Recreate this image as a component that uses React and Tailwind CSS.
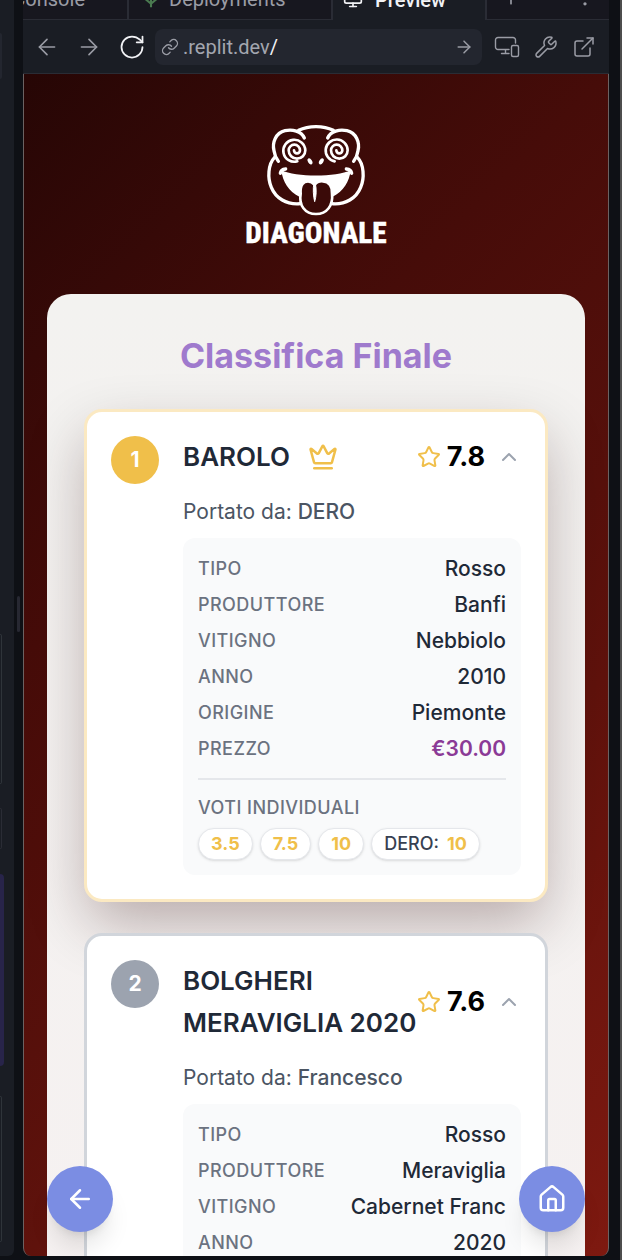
import {
  ArrowLeft,
  ArrowRight,
  ChevronUp,
  Crown,
  EllipsisVertical,
  ExternalLink,
  House,
  Link,
  Monitor,
  Plus,
  RotateCw,
  Star,
  Wrench,
} from "lucide-react";

const wines = [
  {
    rank: 1,
    name: "BAROLO",
    by: "DERO",
    score: "7.8",
    winner: true,
    details: [
      ["Tipo", "Rosso"],
      ["Produttore", "Banfi"],
      ["Vitigno", "Nebbiolo"],
      ["Anno", "2010"],
      ["Origine", "Piemonte"],
    ],
    price: "€30.00",
    votes: [{ value: "3.5" }, { value: "7.5" }, { value: "10" }, { who: "DERO", value: "10" }],
  },
  {
    rank: 2,
    name: "BOLGHERI MERAVIGLIA 2020",
    by: "Francesco",
    score: "7.6",
    winner: false,
    details: [
      ["Tipo", "Rosso"],
      ["Produttore", "Meraviglia"],
      ["Vitigno", "Cabernet Franc"],
      ["Anno", "2020"],
    ],
  },
];

function Logo() {
  return (
    <svg viewBox="0 0 480 420" className="h-[140px] w-40" role="img" aria-label="Diagonale">
      <g fill="none" stroke="#fff" strokeWidth="10" strokeLinecap="round" strokeLinejoin="round">
        <path d="M188 46 C218 31 262 31 292 46" />
        <path d="M205 69 C196 48 169 42 147 47 C119 54 108 82 114 107 C116 121 120 130 127 139" />
        <path d="M275 69 C284 48 311 42 333 47 C361 54 372 82 366 107 C364 121 360 130 353 139" />
        <path d="M116 127 C96 147 94 190 106 217 C119 249 151 270 193 266" />
        <path d="M364 127 C384 147 386 190 374 217 C361 249 329 270 287 266" />
        <path d="M133 175 C134 168 140 163 149 162" />
        <path d="M347 175 C346 168 340 163 331 162" />
      </g>
      <path
        d="M136 166 C180 187 300 187 344 166 C340 200 322 230 290 245 L190 245 C158 230 140 200 136 166 Z"
        fill="#fff"
      />
      <path
        d="M194 236 C192 211 202 199 216 199 C226 199 232 205 236 210 C242 201 250 198 261 199 C279 200 290 214 288 236 C292 271 273 297 240 297 C207 297 188 271 194 236 Z"
        fill="#3a0a08"
        stroke="#fff"
        strokeWidth="8"
      />
      <path d="M234 206 C230 219 232 245 236 260 C241 245 242 222 238 206 Z" fill="#fff" stroke="#fff" strokeWidth="3" />
      <g fill="none" stroke="#fff" strokeWidth="8" strokeLinecap="round">
        <path d="M184 139 A33 33 0 1 1 208 106 A25 25 0 0 1 158 106 A17 17 0 0 1 192 106 A9 9 0 0 1 174 106" />
        <path d="M296 139 A33 33 0 1 1 335 106 A25 25 0 0 1 285 106 A17 17 0 0 1 319 106 A9 9 0 0 1 301 106" />
      </g>
      <ellipse cx="222" cy="139" rx="6" ry="10" transform="rotate(-32 222 139)" fill="#fff" />
      <ellipse cx="256" cy="139" rx="6" ry="10" transform="rotate(32 256 139)" fill="#fff" />
      <text
        x="240"
        y="385"
        textAnchor="middle"
        fill="#fff"
        stroke="#fff"
        strokeWidth="1"
        fontSize="88"
        fontWeight="800"
        fontFamily="'Roboto Condensed', 'Liberation Sans Narrow', Roboto, sans-serif"
      >
        DIAGONALE
      </text>
    </svg>
  );
}

function WineCard({ wine }) {
  return (
    <article
      className={
        "flex items-start gap-6 rounded-[18px] border-[3px] bg-white p-6 " +
        (wine.winner ? "border-[#fbe9c2] shadow-[0_24px_60px_-4px_rgba(40,0,0,0.3)]" : "border-[#d1d5db]")
      }
    >
      <div
        className={
          "flex size-12 shrink-0 items-center justify-center rounded-full text-[21px] font-bold text-white " +
          (wine.winner ? "bg-[#f0bf4a]" : "bg-[#9ca3af]")
        }
      >
        {wine.rank}
      </div>
      <div className="min-w-0 flex-1">
        <header className="flex items-center">
          <h2 className="flex flex-1 items-center gap-[18px] text-[26px] leading-[42px] font-semibold text-[#1f2937]">
            {wine.name}
            {wine.winner && <Crown className="size-[30px] shrink-0 text-[#f0bf4a]" />}
          </h2>
          <Star className="size-6 shrink-0 text-[#f0bf4a]" />
          <span className="ml-[6px] text-[27px] font-bold text-black">{wine.score}</span>
          <button type="button" aria-label="Chiudi dettagli" className="ml-3 text-[#9ca3af]">
            <ChevronUp className="size-6" />
          </button>
        </header>
        <p className="mt-[19px] text-[21px] leading-[30px] text-[#4b5563]">
          Portato da: <span className="font-medium">{wine.by}</span>
        </p>
        <section className="mt-[11px] rounded-xl bg-[#f9fafb] px-[15px] pt-4 pb-[15px]">
          <dl className="flex flex-col gap-[6px]">
            {wine.details.map(([label, value]) => (
              <div key={label} className="flex justify-between">
                <dt className="text-lg leading-[30px] font-medium tracking-wide text-[#6b7280] uppercase">{label}</dt>
                <dd className="text-[21px] leading-[30px] font-medium text-[#1f2937]">{value}</dd>
              </div>
            ))}
            {wine.price && (
              <div className="flex justify-between">
                <dt className="text-lg leading-[30px] font-medium tracking-wide text-[#6b7280] uppercase">Prezzo</dt>
                <dd className="text-[21px] leading-[30px] font-semibold text-[#8b3a96]">{wine.price}</dd>
              </div>
            )}
          </dl>
          {wine.votes && (
            <div className="mt-[14px] border-t-2 border-[#e5e7eb] pt-4">
              <h3 className="text-lg leading-6 font-medium tracking-wide text-[#6b7280] uppercase">Voti individuali</h3>
              <ul className="mt-2 flex flex-wrap gap-[7px]">
                {wine.votes.map((vote, i) => (
                  <li
                    key={i}
                    className="flex gap-2 rounded-full border border-[#e5e7eb] bg-white px-3 py-[3px] text-lg leading-6 font-medium text-[#374151] shadow-sm"
                  >
                    {vote.who && <span>{vote.who}:</span>}
                    <span className="font-bold text-[#f0bf4a]">{vote.value}</span>
                  </li>
                ))}
              </ul>
            </div>
          )}
        </section>
      </div>
    </article>
  );
}

function Tabs() {
  return (
    <nav className="flex h-5 shrink-0 overflow-hidden bg-[#17171f] font-['Roboto',sans-serif] text-[20px] leading-6 text-[#9a9ca5]">
      <a href="#console" className="flex w-[106px] items-end justify-end border-r-2 border-b border-[#2a2c35] pr-[42px] pb-2">
        Console
      </a>
      <a href="#deployments" className="flex w-[202px] items-end gap-2 border-b border-[#2a2c35] pb-2 pl-3">
        <svg viewBox="0 0 24 24" className="mb-[3px] size-5" fill="none" stroke="#4a7a50" strokeWidth="2.500">
          <path d="M12 3v20M12 19l-7-6M12 19l7-6" />
        </svg>
        Deployments
      </a>
      <a
        href="#preview"
        className="flex w-[156px] items-end gap-3 border-x-2 border-[#2a2c35] bg-[#1a1d24] pb-2 pl-[10px] font-medium text-[#f1f2f5]"
      >
        <Monitor className="mb-[3px] size-5" />
        Preview
      </a>
      <div className="flex flex-1 items-end justify-between border-b border-[#2a2c35] px-[14px] pb-2">
        <button type="button" aria-label="New tab">
          <Plus className="mb-[3px] size-5" />
        </button>
        <button type="button" aria-label="More">
          <EllipsisVertical className="mb-[3px] size-5" />
        </button>
      </div>
    </nav>
  );
}

function Toolbar() {
  return (
    <div className="flex h-[54px] shrink-0 items-center border-b border-[#2a2c35] bg-[#1a1d24] pr-[13px] pl-[11px] text-[#9a9ca5]">
      <button type="button" aria-label="Back">
        <ArrowLeft className="size-[26px]" strokeWidth={1.5} />
      </button>
      <button type="button" aria-label="Forward" className="ml-4">
        <ArrowRight className="size-[26px]" strokeWidth={1.5} />
      </button>
      <button type="button" aria-label="Reload" className="ml-4 text-[#f1f2f5]">
        <RotateCw className="size-7" strokeWidth={1.5} />
      </button>
      <div className="ml-[9px] flex h-9 min-w-0 flex-1 items-center gap-1 rounded-lg bg-[#23262f] pr-2 pl-[6px]">
        <Link className="size-[18px] shrink-0" strokeWidth={1.8} />
        <p className="flex-1 font-['Roboto',sans-serif] text-[20px] leading-6 text-[#a3a6b0]">
          .replit.dev<span className="text-[#f1f2f5]">/</span>
        </p>
        <button type="button" aria-label="Go">
          <ArrowRight className="size-5" strokeWidth={1.8} />
        </button>
      </div>
      <div className="ml-3 flex items-center gap-[14px]">
        <button type="button" aria-label="Devices">
          <svg viewBox="0 0 26 26" className="size-[26px]" fill="none" stroke="currentColor" strokeWidth="1.4" strokeLinecap="round">
            <path d="M15 15.500H4a2.500 2.500 0 0 1-2.500-2.500V6A2.500 2.500 0 0 1 4 3.500h15A2.500 2.500 0 0 1 21.500 6v3M11.500 15.500v4M7.500 19.500h7.500" />
            <rect x="17.500" y="11.500" width="7" height="11" rx="1.500" />
          </svg>
        </button>
        <button type="button" aria-label="Developer tools">
          <Wrench className="size-6" strokeWidth={1.5} />
        </button>
        <button type="button" aria-label="Open in new tab">
          <ExternalLink className="size-6" strokeWidth={1.5} />
        </button>
      </div>
    </div>
  );
}

function SideStrip() {
  return (
    <aside className="flex w-[14px] shrink-0 flex-col overflow-hidden rounded-br-md bg-[#1a1d24]">
      <div className="mt-[33px] h-[46px] w-[2px] rounded-r bg-[#23262f]" />
      <div className="mt-[555px] h-[150px] w-[2px] rounded-r border border-l-0 border-[#2f343a]" />
      <div className="mt-6 h-[41px] w-[2px] rounded-r border border-l-0 border-[#2a2c35]" />
      <div className="mt-[25px] h-48 w-1 rounded-r bg-[#28244a]" />
      <div className="mt-[30px] h-[146px] w-[2px] rounded-r border border-l-0 border-[#2f343a]" />
    </aside>
  );
}

export default function App() {
  return (
    <div className="flex h-screen overflow-hidden border-r-2 border-[#4e4e4e] bg-[#0e1015] pb-1 font-['Inter',sans-serif]">
      <SideStrip />
      <div className="flex w-[9px] shrink-0 items-center">
        <div className="mx-auto mb-7 h-9 w-[3px] rounded bg-[#272832]" />
      </div>
      <div className="mr-[11px] flex min-w-0 flex-1 flex-col">
        <Tabs />
        <Toolbar />
        <div className="relative flex min-h-0 flex-1 flex-col overflow-hidden rounded-b-lg border-x border-[#6b6262] bg-[linear-gradient(135deg,#260605_0%,#460c09_33%,#5f120c_67%,#7e1910_100%)]">
          <main className="min-h-0 flex-1 overflow-y-auto [scrollbar-width:none]">
            <div className="flex justify-center pt-[41px] pb-[39px]">
              <Logo />
            </div>
            <section className="mx-[23px] rounded-3xl bg-linear-to-b from-[#f3f2f0] to-[#f6f1f1] px-[37px] pt-9 pb-36">
              <h1 className="text-center text-[34px] leading-[52px] font-bold text-[#9f7acd]">Classifica Finale</h1>
              <div className="mt-[27px] flex flex-col gap-[31px]">
                {wines.map((wine) => (
                  <WineCard key={wine.rank} wine={wine} />
                ))}
              </div>
            </section>
          </main>
          <button
            type="button"
            aria-label="Indietro"
            className="absolute bottom-6 left-[23px] flex size-[66px] items-center justify-center rounded-full bg-[#7b8de3] text-white shadow-xl"
          >
            <ArrowLeft className="size-[30px]" />
          </button>
          <button
            type="button"
            aria-label="Home"
            className="absolute right-[23px] bottom-6 flex size-[66px] items-center justify-center rounded-full bg-[#7b8de3] text-white shadow-xl"
          >
            <House className="size-[30px]" />
          </button>
        </div>
      </div>
    </div>
  );
}
